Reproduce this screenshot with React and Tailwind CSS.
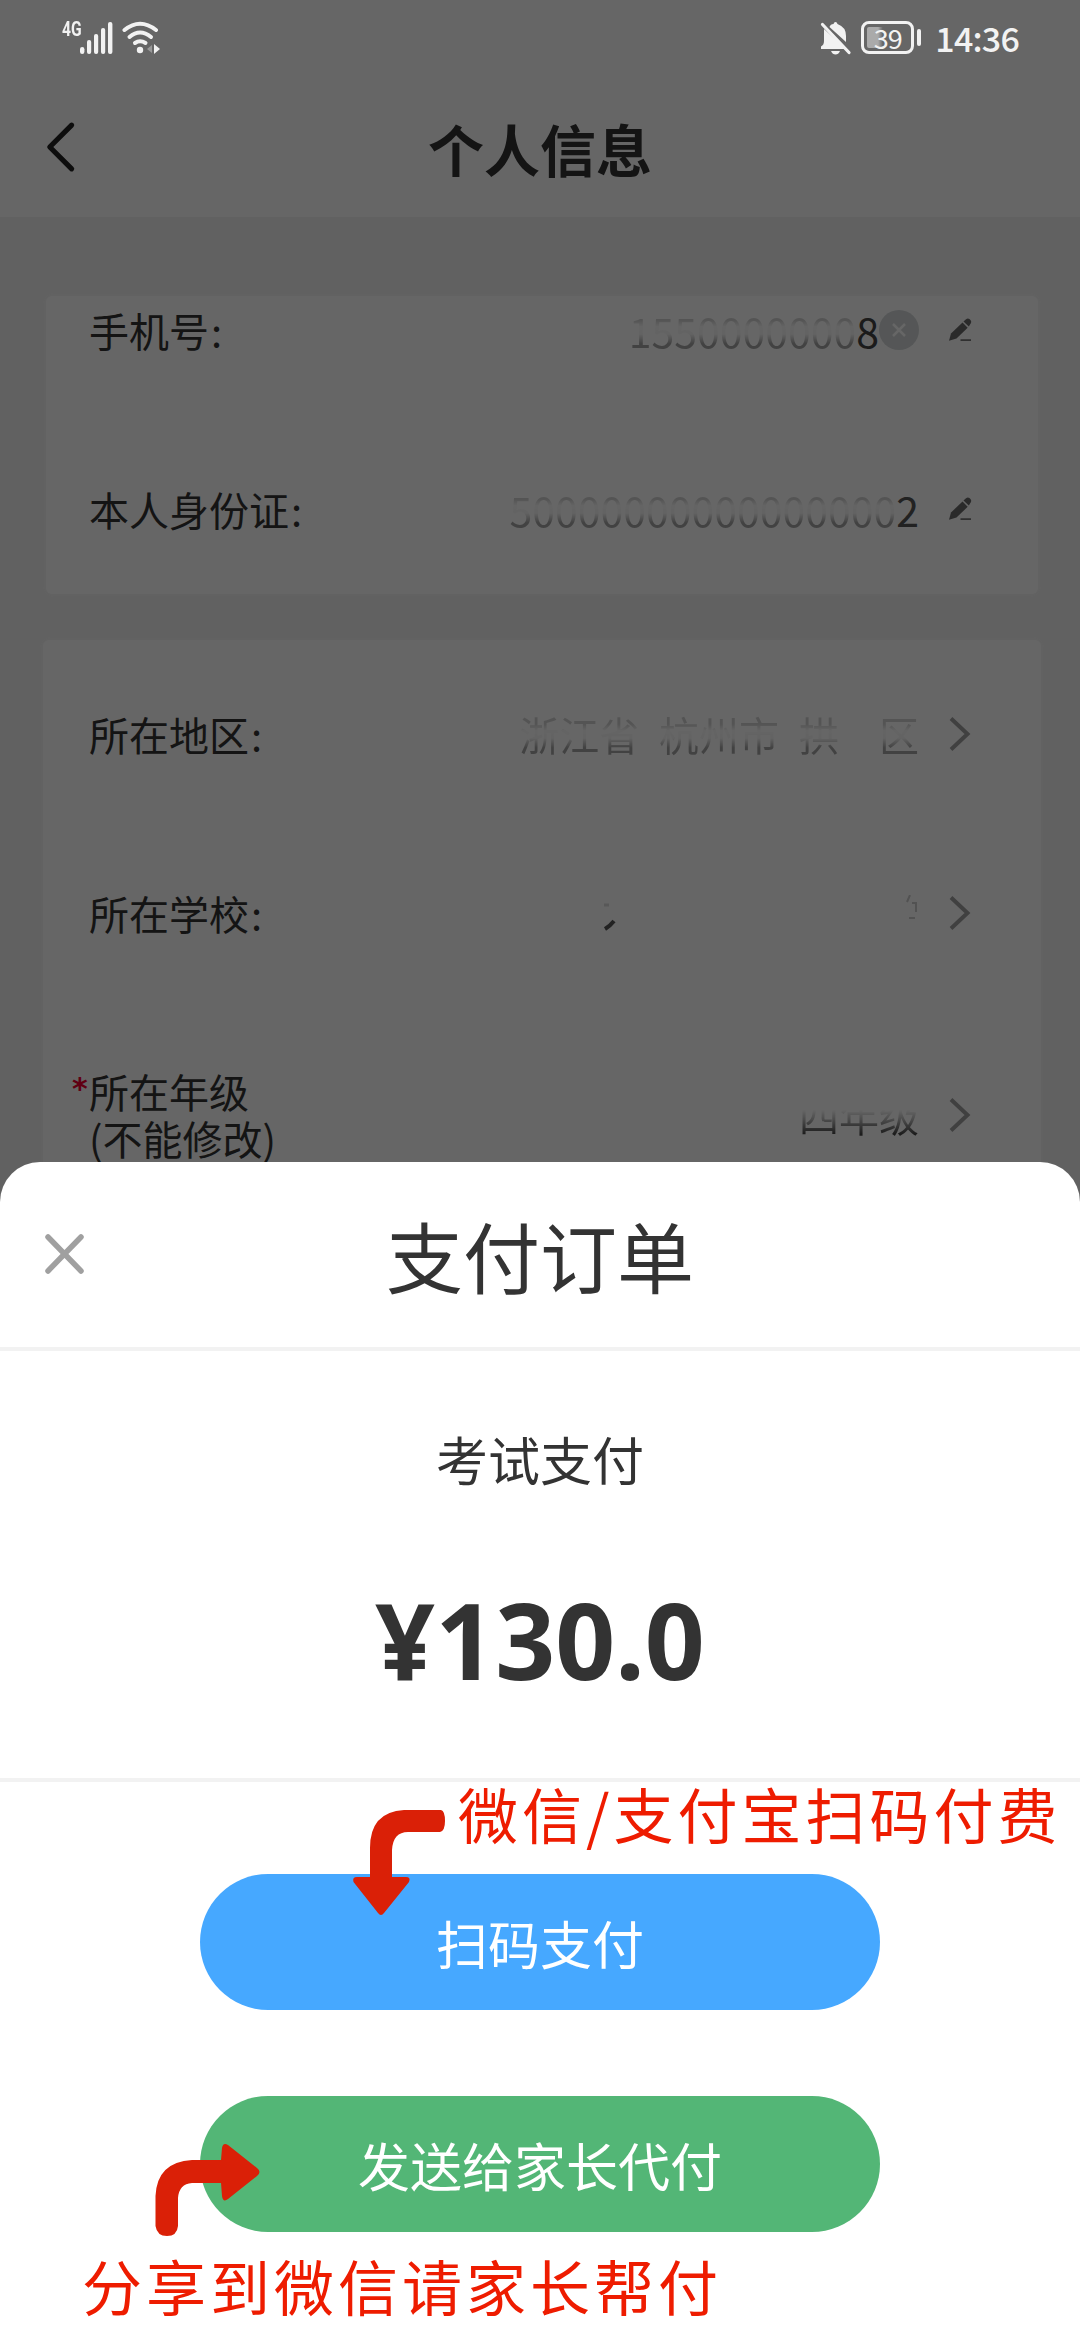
import { ChevronLeft } from "lucide-react"

function StatusBar() {
  return (
    <div className="relative z-20 flex h-[76px] items-start pt-[21px] text-[#f2f2f2]">
      <span className="ml-[62px] w-[18px] origin-left scale-x-[0.78] font-['Roboto','Noto_Sans_CJK_SC',sans-serif] text-[20px] leading-[17px] font-bold">
        4G
      </span>
      <svg className="h-[34px] w-[33px]" viewBox="0 0 33 34" fill="currentColor">
        <rect x="0" y="26" width="4.4" height="7" rx="2.2" />
        <rect x="7" y="19" width="4.2" height="14" rx="2" />
        <rect x="14" y="13" width="4.2" height="20" rx="2" />
        <rect x="21" y="7" width="4.2" height="26" rx="2" />
        <rect x="28" y="1" width="4.4" height="32" rx="2" />
      </svg>
      <svg className="ml-[9px] h-[34px] w-[40px]" viewBox="0 0 40 34" fill="none" stroke="currentColor" strokeLinecap="round">
        <path d="M2.5 9 Q18 -3.5 34 9" strokeWidth="4" />
        <path d="M7.5 16 Q18 7 29 16" strokeWidth="4" />
        <path d="M13 22 Q18 18.5 23.5 22" strokeWidth="4" />
        <circle cx="18" cy="29" r="3.2" fill="currentColor" stroke="none" />
        <path d="M30 24 L30 32 L25 28 Z" fill="#999" stroke="none" />
        <path d="M32 23 L38 28 L32 33 Z" fill="currentColor" stroke="none" />
      </svg>

      <svg className="ml-auto h-[34px] w-[32px]" viewBox="0 0 32 34" fill="currentColor">
        <path d="M4 8 L26 28 H1 V25.5 Q4 24 4 20 Z" />
        <path d="M9.5 6 Q10.5 3 13.5 3 Q14 1 15.5 1 Q17 1 17.5 3 Q26 6 26 15 V21 Z" />
        <path d="M11 30 H20 Q18.5 33.5 15.5 33.5 Q12.5 33.5 11 30 Z" />
        <path d="M2.5 3.5 L29 31.5" stroke="currentColor" strokeWidth="3.2" strokeLinecap="round" />
      </svg>
      <div className="ml-[9px] flex h-[33px] w-[53px] items-center justify-center rounded-[8px] border-[3px] border-[#f2f2f2] bg-linear-to-r from-[#aaa] from-30% to-transparent to-40% bg-clip-content p-[3px] text-[27px] leading-none tracking-[-1px]">
        39
      </div>
      <div className="mt-[8px] ml-[3px] h-[17px] w-[4px] rounded-full bg-[#f2f2f2]" />
      <span className="mr-[61px] ml-[14px] text-[34px] leading-[34px] font-medium tracking-[-0.8px]">14:36</span>
    </div>
  )
}

function EditIcon() {
  return (
    <svg className="ml-[29px] h-[24px] w-[24px]" viewBox="0 0 24 24" fill="#6a6a6a">
      <path d="M15.5 3.5 L18 1.3 Q19.8 -0.2 21.5 1.1 L22.6 2.2 Q23.7 3.6 22.8 5.3 L20.8 8.5 Z" />
      <path d="M14.5 4.5 L19.7 9.8 L8.5 20.5 L1 22.8 L3 15.5 Z" />
      <path d="M12.5 21.3 H23 V22.9 H12.5 Z" />
    </svg>
  )
}

function ArrowRight() {
  return (
    <svg className="ml-[30px] h-[36px] w-[23px]" viewBox="0 0 23 36" fill="none" stroke="#a0a0a0" strokeWidth="4">
      <path d="M2 2.5 L18.5 18 L2 33.5" />
    </svg>
  )
}

function Row({ label, children }) {
  return (
    <div className="flex h-[68px] items-center justify-between pr-[66px] pl-[43px]">
      <span className="text-[#333]">
        {label}
        <span className="pl-[2px]">:</span>
      </span>
      <div className="flex items-center">{children}</div>
    </div>
  )
}

// keeps only the edges of the characters, the rest is wiped out
const wiped =
  "whitespace-pre opacity-35 [mask-image:linear-gradient(to_bottom,rgba(0,0,0,0.5)_28%,rgba(0,0,0,0.06)_42%,rgba(0,0,0,0.1)_58%,rgba(0,0,0,1)_78%)]"

function InfoPage() {
  return (
    <div>
      <div className="flex h-[141px] items-start bg-white pt-[32px]">
        <div className="w-[200px] pt-[8px] pl-[37px]">
          <ChevronLeft className="size-[62px]" viewBox="5.500 3.500 17 17" color="#222" strokeWidth={1.4} />
        </div>
        <h1 className="w-[680px] text-center text-[56px] leading-[80px] font-bold text-[#333]">个人信息</h1>
      </div>

      <div className="pt-[79px] pr-[39px] pl-[43px] text-[40px] leading-[47px]">
        <div className="mx-[3px] flex h-[298px] flex-col gap-[111px] rounded-[6px] bg-white shadow-[0_0_8px_#f8f8f8]">
          <Row label="手机号">
            <span className={`text-[41px] ${wiped}`}>1550000000</span>
            <span className="text-[41px] text-[#444]">8</span>
            <span className="flex h-[40px] w-[40px] items-center justify-center rounded-full bg-[#d4d8d9]">
              <svg className="size-[16px]" viewBox="0 0 16 16" stroke="#fff" strokeWidth="2.5">
                <path d="M2 2 L14 14 M14 2 L2 14" />
              </svg>
            </span>
            <EditIcon />
          </Row>
          <Row label="本人身份证">
            <span className={`text-[41px] ${wiped}`}>50000000000000000</span>
            <span className="text-[41px] text-[#555]">2</span>
            <EditIcon />
          </Row>
        </div>

        <div className="mt-[46px] flex h-[560px] flex-col gap-[111px] rounded-[6px] bg-white px-[3px] pt-[60px] shadow-[0_0_8px_#f8f8f8]">
          <Row label="所在地区">
            <span className={`[word-spacing:1px] ${wiped}`}>浙江省  杭州市  拱</span>
            <span className="w-[40px]" />
            <span className={wiped}>区</span>
            <ArrowRight />
          </Row>
          <Row label="所在学校">
            <svg className="h-[36px] w-[318px]" viewBox="0 0 318 36" fill="none" stroke="#777" strokeWidth="3">
              <path d="M4 34 Q9 31 13 26" stroke="#555" strokeWidth="4" />
              <path d="M3 10 H8" stroke="#ddd" />
              <path d="M309 0 L306 7 M311 8 H315 V17 M308 23 H314" stroke="#ccc" strokeWidth="2" />
            </svg>
            <ArrowRight />
          </Row>
          <div className="flex items-center justify-between pt-[10px] pr-[66px] pl-[26px]">
            <div className="flex items-start text-[#333]">
              <span className="w-[17px] pt-[6px] font-['DejaVu_Sans',sans-serif] text-[30px] leading-[30px] font-bold text-[#f00030]">
                *
              </span>
              <div>
                所在年级
                <br />
                (不能修改)
              </div>
            </div>
            <div className="flex items-center">
              <span className="[mask-image:linear-gradient(to_bottom,transparent_38%,rgba(0,0,0,0.35)_60%,rgba(0,0,0,0.9)_90%)] text-[#333]">
                四年级
              </span>
              <ArrowRight />
            </div>
          </div>
        </div>
      </div>
    </div>
  )
}

function PaySheet() {
  return (
    <div className="absolute inset-x-0 top-[1162px] bottom-0 z-20 flex flex-col rounded-t-[40px] bg-white text-[#333]">
      <div className="flex h-[189px] items-start border-b-[4px] border-[#f2f2f2]">
        <svg className="mt-[71px] ml-[44px] h-[42px] w-[41px]" viewBox="0 0 41 42" stroke="#a0a0a0" strokeWidth="5.5" strokeLinecap="round">
          <path d="M4 4 L37 38 M37 4 L4 38" />
        </svg>
        <h2 className="mt-[37px] mr-[85px] flex-1 text-center text-[77px] leading-[112px]">支付订单</h2>
      </div>

      <div className="flex h-[431px] flex-col items-center border-b-[4px] border-[#f2f2f2] pt-[78px]">
        <div className="text-[52px] leading-[60px]">考试支付</div>
        <div className="mt-[91px] font-['Noto_Sans','Noto_Sans_CJK_SC',sans-serif] text-[105px] leading-[120px] font-bold">
          ¥130.0
        </div>
      </div>

      <div className="flex flex-col items-center gap-[86px] pt-[92px] text-[52px] text-white">
        <button className="h-[136px] w-[680px] rounded-full bg-[#46a8ff] pt-[1px]">扫码支付</button>
        <button className="h-[136px] w-[680px] rounded-full bg-[#53b676] pt-[1px]">发送给家长代付</button>
      </div>
    </div>
  )
}

// red hints drawn over the sheet
function Annotations() {
  return (
    <div className="text-[60px] leading-[72px] tracking-[4px] whitespace-nowrap text-[#ee1c00]">
      <span className="absolute top-[1777px] left-[458px] z-30">微信/支付宝扫码付费</span>
      <svg className="absolute top-[1808px] left-[352px] z-30 h-[110px] w-[96px]" viewBox="0 0 96 110" fill="#da2007">
        <path d="M89 2 H52 Q18 4 18 40 V69 H5 Q0 69 1.5 74 L26 105 Q29 109 32 105 L57 74 Q59 69 54 69 H40 V42 Q41 24 56 24 H88 Q93 23 93 13 Q93 3 89 2 Z" />
      </svg>
      <svg className="absolute top-[2142px] left-[154px] z-30 h-[96px] w-[108px]" viewBox="0 0 108 96" fill="#da2007">
        <path d="M1.5 84 V54 Q3 20 38 18 H67 L68 6 Q69 0 74 3 L103 26 Q108 30 103 34 L74 57 Q69 61 68 54 L67 41 H38 Q25 42 24 56 V84 Q23 94 13 94 Q3 94 1.5 84 Z" />
      </svg>
      <span className="absolute top-[2249px] left-[82px] z-30">分享到微信请家长帮付</span>
    </div>
  )
}

export default function App() {
  return (
    <div className="relative h-[2340px] w-[1080px] overflow-hidden bg-[#f2f2f2] font-['Noto_Sans_CJK_SC',sans-serif]">
      <div className="bg-white">
        <StatusBar />
      </div>
      <InfoPage />
      <div className="absolute inset-0 z-10 bg-black/60" />
      <PaySheet />
      <Annotations />
    </div>
  )
}
